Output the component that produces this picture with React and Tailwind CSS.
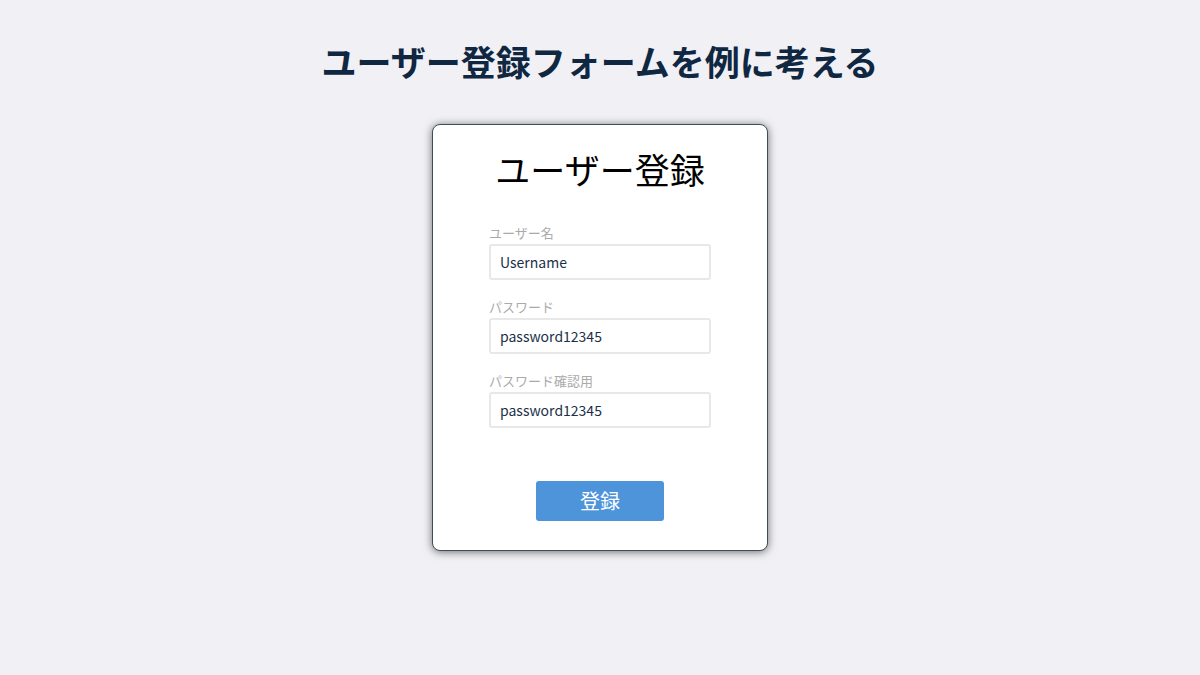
const fields = [
  { label: 'ユーザー名', value: 'Username' },
  { label: 'パスワード', value: 'password12345' },
  { label: 'パスワード確認用', value: 'password12345' },
]

const App = () => {
  return (
    <div className="flex min-h-[675px] flex-col items-center bg-[#f0f0f5] font-['Noto_Sans_CJK_JP',sans-serif]">
      <h1 className="mt-[36px] text-[35px] font-bold leading-[50px] text-[#0f2741]">
        ユーザー登録フォームを例に考える
      </h1>
      <div className="mt-[38px] flex h-[427px] w-[336px] flex-col items-center rounded-[8px] border border-[#3d4d5a] bg-white shadow-[0_1px_8px_rgba(0,0,0,0.55)]">
        <h2 className="mt-[22px] text-[35px] font-normal leading-[44px] text-black">ユーザー登録</h2>
        <div className="mt-[33px] flex w-[222px] flex-col gap-[18px]">
          {fields.map((f) => (
            <div key={f.label} className="flex flex-col">
              <label className="text-[13px] leading-[18px] text-[#aaaaaa]">{f.label}</label>
              <div className="mt-[2px] flex h-[36px] items-center rounded-[3px] border-2 border-[#e8e8e8] px-[9px] text-[14px] text-[#1b3048]">
                {f.value}
              </div>
            </div>
          ))}
        </div>
        <button
          type="button"
          className="mt-[53px] h-[40px] w-[128px] rounded-[3px] bg-[#4d94db] text-[20px] text-white"
        >
          登録
        </button>
      </div>
    </div>
  )
}

export default App
